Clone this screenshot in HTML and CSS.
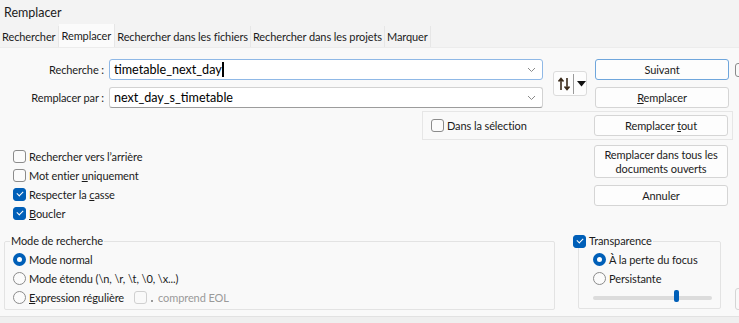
FILE: index.html
```html
<!DOCTYPE html>
<html lang="fr">
<head>
    <meta charset="UTF-8">
    <title>Remplacer</title>
    <link rel="stylesheet" href="styles.css">
</head>
<body>
    <div class="titlebar">Remplacer</div>

    <div class="tabs">
        <span class="tab">Rechercher</span>
        <span class="tab active">Remplacer</span>
        <span class="tab">Rechercher dans les fichiers</span>
        <span class="tab">Rechercher dans les projets</span>
        <span class="tab">Marquer</span>
    </div>

    <div class="panel">
        <!-- Search / replace fields -->
        <div class="find-grid">
            <label class="field-label">Recherche :</label>
            <div class="combo focused">
                <span class="combo-text">timetable_next_day<span class="caret"></span></span>
                <svg class="chevron" width="9" height="6" viewBox="0 0 9 6"><path d="M1 1l3.5 3.5L8 1" fill="none" stroke="#8a8a8a" stroke-width="1"/></svg>
            </div>
            <button class="swap">
                <svg width="12" height="14" viewBox="0 0 12 14">
                    <path d="M3 13V2M0.5 4.5L3 1.5l2.5 3" fill="none" stroke="#3a2a1a" stroke-width="1.6"/>
                    <path d="M9 1v11M6.5 9.5L9 12.5l2.5-3" fill="none" stroke="#3a2a1a" stroke-width="1.6"/>
                </svg>
                <span class="swap-sep"></span>
                <svg width="9" height="6" viewBox="0 0 9 6"><path d="M0 0h9L4.5 5.5z" fill="#111"/></svg>
            </button>
            <button class="btn default">Suivant</button>
            <span class="edge-check"></span>

            <label class="field-label">Remplacer par :</label>
            <div class="combo">
                <span class="combo-text">next_day_s_timetable</span>
                <svg class="chevron" width="9" height="6" viewBox="0 0 9 6"><path d="M1 1l3.5 3.5L8 1" fill="none" stroke="#8a8a8a" stroke-width="1"/></svg>
            </div>
            <button class="btn"><u>R</u>emplacer</button>
        </div>

        <!-- In selection -->
        <div class="selection-box">
            <label class="check"><span class="box"></span><span>Dans la sélection</span></label>
            <button class="btn">Remplacer <u>t</u>out</button>
        </div>

        <div class="middle">
            <div class="options">
                <label class="check"><span class="box"></span><span>Rechercher vers l’arrière</span></label>
                <label class="check"><span class="box"></span><span>Mot entier <u>u</u>niquement</span></label>
                <label class="check"><span class="box checked"></span><span>Respecter la <u>c</u>asse</span></label>
                <label class="check"><span class="box checked"></span><span><u>B</u>oucler</span></label>
            </div>
            <div class="actions">
                <button class="btn tall">Remplacer dans tous les documents ouverts</button>
                <button class="btn">Annuler</button>
            </div>
        </div>

        <div class="bottom">
            <fieldset class="mode">
                <legend>Mode de recherche</legend>
                <label class="radio"><span class="dot checked"></span><span>Mode normal</span></label>
                <label class="radio"><span class="dot"></span><span>Mode étendu (\n, \r, \t, \0, \x...)</span></label>
                <div class="regex-row">
                    <label class="radio"><span class="dot"></span><span><u>E</u>xpression régulière</span></label>
                    <label class="check disabled"><span class="box"></span><span class="accel-space"></span><span>comprend EOL</span></label>
                </div>
            </fieldset>

            <fieldset class="transp">
                <legend><label class="check"><span class="box checked"></span><span>Transparence</span></label></legend>
                <label class="radio"><span class="dot checked"></span><span>À la perte du focus</span></label>
                <label class="radio"><span class="dot"></span><span>Persistante</span></label>
                <div class="slider"><span class="thumb"></span></div>
            </fieldset>

            <span class="edge-btn"></span>
        </div>
    </div>

    <div class="statusbar"></div>
</body>
</html>
```

FILE: styles.css
```css
body {
    font-family: 'Lato', 'Liberation Sans', sans-serif;
    font-size: 11px;
    letter-spacing: -0.1px;
    margin: 0;
    width: 739px;
    height: 323px;
    overflow: hidden;
    color: #1b1b1b;
    background-color: #f9f9f9;
}

button {
    font-family: inherit;
    font-size: 11px;
    letter-spacing: -0.1px;
    color: #1b1b1b;
}

.titlebar {
    height: 26px;
    line-height: 25px;
    padding-left: 4px;
    font-size: 12.5px;
    letter-spacing: 0;
    background: #f3f3f3;
}

.tabs {
    display: flex;
    height: 22px;
    background: #f3f3f3;
    border-bottom: 1px solid #ececec;
    box-sizing: border-box;
}

.tab {
    padding: 0 2px 0 2px;
    line-height: 22px;
    border-right: 1px solid #e6e6e6;
}

.tab.active {
    background: #fbfbfb;
    padding: 0 3px;
    margin-top: -2px;
    line-height: 24px;
}

.panel {
    height: 268px;
    background: #f9f9f9;
}

/* top fields */
.find-grid {
    display: grid;
    grid-template-columns: 104px 439px 44px 141px auto;
    grid-template-rows: 21px 21px;
    row-gap: 7px;
    padding-top: 11px;
}

.field-label {
    text-align: right;
    line-height: 21px;
}

.combo {
    margin-left: 5px;
    width: 434px;
    box-sizing: border-box;
    height: 21px;
    border: 1px solid #d2d2d2;
    border-bottom-color: #9c9c9c;
    border-radius: 3px;
    background: #fff;
    display: flex;
    align-items: center;
    justify-content: space-between;
    padding: 0 6px 0 4px;
}

.combo.focused {
    border-color: #8fb8e6;
    border-bottom-color: #8fb8e6;
}

.combo-text {
    font-size: 12.6px;
    letter-spacing: 0;
    color: #000;
    display: flex;
    align-items: center;
}

.caret {
    display: inline-block;
    width: 2px;
    height: 15px;
    background: #000;
}

.swap {
    grid-row: 1 / 3;
    grid-column: 3;
    align-self: center;
    margin-left: 10px;
    width: 34px;
    height: 25px;
    padding: 0 0 0 4px;
    border: 1px solid #dcdcdc;
    border-radius: 3px;
    background: #fdfdfd;
    display: flex;
    align-items: center;
    gap: 3px;
}

.swap-sep {
    width: 1px;
    height: 20px;
    background: #9a9a9a;
}

.btn {
    width: 134px;
    height: 21px;
    padding: 0;
    border: 1px solid #d5d5d5;
    border-radius: 3px;
    background: #fdfdfd;
}

.find-grid .btn {
    grid-column: 4;
    margin-left: 8px;
}

.btn.default {
    border-color: #6fa6dc;
}

.edge-check {
    margin: 4px 0 0 7px;
    width: 13px;
    height: 12px;
    border: 1px solid #8a8a8a;
    border-radius: 3px;
}

/* checkboxes and radios */
.check,
.radio {
    display: flex;
    align-items: center;
    gap: 3px;
    height: 19px;
    white-space: nowrap;
}

.box {
    flex-shrink: 0;
    width: 11px;
    height: 11px;
    border: 1px solid #8b8b8b;
    border-radius: 3px;
    background: #fbfbfb;
    position: relative;
}

.box.checked {
    background: #005fb8;
    border-color: #005fb8;
}

.box.checked::after {
    content: "";
    position: absolute;
    left: 3px;
    top: 2px;
    width: 5px;
    height: 3px;
    border-left: 1px solid #fff;
    border-bottom: 1px solid #fff;
    transform: rotate(-45deg);
}

.dot {
    flex-shrink: 0;
    width: 11px;
    height: 11px;
    border: 1px solid #8b8b8b;
    border-radius: 50%;
    background: #fbfbfb;
}

.dot.checked {
    width: 5px;
    height: 5px;
    border: 4px solid #005fb8;
    background: #fff;
}

.selection-box {
    margin: 3px 0 0 422px;
    width: 311px;
    height: 29px;
    box-sizing: border-box;
    border: 1px solid #e6e6e6;
    display: flex;
    align-items: center;
    justify-content: space-between;
    padding: 0 4px 0 8px;
}

.middle {
    display: flex;
    justify-content: space-between;
    height: 90px;
}

.options {
    padding: 7px 0 0 13px;
}

.actions {
    display: flex;
    flex-direction: column;
    gap: 7px;
    padding-top: 5px;
    margin-right: 11px;
}

.btn.tall {
    height: 33px;
    line-height: 14px;
    padding: 0 8px;
}

/* bottom groups */
.bottom {
    display: flex;
    align-items: flex-start;
}

fieldset {
    flex-shrink: 0;
    margin: 0;
    border: 1px solid #e3e3e3;
    border-radius: 2px;
    box-sizing: border-box;
}

legend {
    padding: 0 1px;
    line-height: 14px;
}

.mode {
    margin: 4px 0 0 4px;
    width: 551px;
    height: 76px;
    padding: 2px 8px 0;
}

.mode legend {
    margin-left: -3px;
}

.regex-row {
    display: flex;
    align-items: center;
    gap: 4px;
}

.regex-row .radio {
    width: 117px;
}

.check.disabled {
    color: #9a9a9a;
}

.check.disabled .box {
    border-color: #d0d0d0;
    background: #f9f9f9;
}

.accel-space {
    width: 2px;
    height: 2px;
    margin: 7px 2px 0 1px;
    background: #9a9a9a;
}

.transp {
    margin: 4px 0 0 23px;
    width: 143px;
    height: 75px;
    padding: 2px 8px 0 14px;
}

.transp legend {
    margin-left: -21px;
}

.transp legend .check {
    height: 14px;
}

.slider {
    position: relative;
    width: 119px;
    height: 4px;
    margin-top: 8px;
    border-radius: 2px;
    background: #dcdcdc;
}

.thumb {
    position: absolute;
    left: 81px;
    top: -6px;
    width: 5px;
    height: 12px;
    border-radius: 2px;
    background: #005fb8;
}

.edge-btn {
    flex-shrink: 0;
    margin: 58px 0 0 14px;
    width: 20px;
    height: 20px;
    border: 1px solid #d5d5d5;
    border-radius: 3px;
}

.statusbar {
    height: 10px;
    border-top: 1px solid #e2e2e2;
    background: #efefef;
}
```
